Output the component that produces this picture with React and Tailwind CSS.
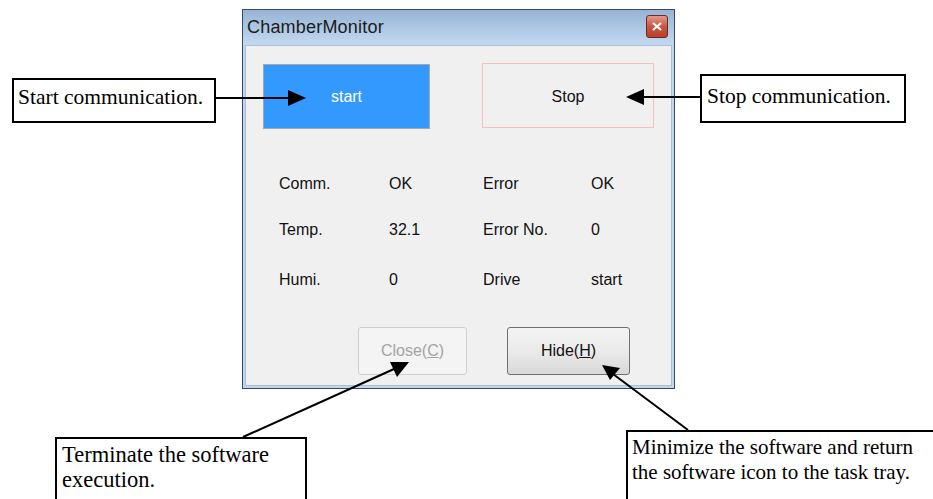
import React from "react";

const uiFont = { fontFamily: '"Liberation Sans", Arial, sans-serif' };
const docFont = { fontFamily: '"Liberation Serif", "Times New Roman", serif' };

const rows = [
  ["Comm.", "OK", "Error", "OK"],
  ["Temp.", "32.1", "Error No.", "0"],
  ["Humi.", "0", "Drive", "start"],
];

const Callout = ({ className, children }) => (
  <div
    className={`absolute border-2 border-black bg-white text-black ${className}`}
    style={docFont}
  >
    {children}
  </div>
);

const ChamberWindow = () => (
  <div
    className="absolute left-[242px] top-[9px] w-[433px] h-[380px] flex flex-col border border-[#3a4a5c] bg-[#c2d7ed]"
    style={uiFont}
  >
    {/* title bar */}
    <div className="h-[35px] flex items-center justify-between pl-[4px] pr-[6px] bg-gradient-to-b from-[#97b4d6] to-[#c3d9ef]">
      <span className="text-[18px] text-[#1b1b1b] tracking-[0.2px]">ChamberMonitor</span>
      <div className="w-[22px] h-[23px] mt-[-2px] rounded-[3px] border border-[#6b2b24] bg-gradient-to-b from-[#e29a8a] via-[#c9553f] to-[#b7402c] flex items-center justify-center">
        <svg width="10" height="9" viewBox="0 0 10 9">
          <path d="M1 1 L9 8 M9 1 L1 8" stroke="#fff" strokeWidth="2.2" />
        </svg>
      </div>
    </div>

    {/* client area */}
    <div className="flex-1 mx-[2px] mb-[2px] bg-[#f0f0f0] border border-[#a9bfd6] flex flex-col">
      <div className="flex justify-between px-[17px] pt-[18px]">
        <button className="w-[167px] h-[65px] bg-[#3399ff] border border-[#a8a8a8] text-white text-[16px]">
          start
        </button>
        <button className="w-[172px] h-[65px] mt-[-1px] pt-[3px] bg-[#f0f0f0] border border-[#f6c0c0] text-[#111] text-[16px]">
          Stop
        </button>
      </div>

      <div className="flex flex-col pl-[33px] mt-[43px] text-[16px] text-[#111]">
        {rows.map((r, i) => (
          <div
            key={r[0]}
            className={`grid grid-cols-[110px_94px_108px_auto] h-[20px] items-center ${i === 1 ? "mt-[26px]" : i === 2 ? "mt-[30px]" : ""}`}
          >
            {r.map((c, j) => (
              <span key={j}>{c}</span>
            ))}
          </div>
        ))}
      </div>

      <div className="flex pl-[112px] gap-[40px] mt-[39px]">
        <button className="w-[109px] h-[48px] rounded-[3px] border border-[#cfcfcf] bg-[#f4f4f4] text-[#a3a3a3] text-[16px]">
          Close(<span className="underline">C</span>)
        </button>
        <button className="w-[123px] h-[48px] rounded-[3px] border border-[#707070] bg-gradient-to-b from-[#f3f3f3] via-[#ebebeb] to-[#d8d8d8] text-[#111] text-[16px]">
          Hide(<span className="underline">H</span>)
        </button>
      </div>
    </div>
  </div>
);

export default function App() {
  return (
    <div className="relative w-[933px] h-[499px] bg-white overflow-hidden">
      <ChamberWindow />

      <Callout className="left-[12px] top-[78px] w-[204px] h-[45px] pl-[4px] pt-[5px] text-[21.5px] leading-[24px]">
        Start communication.
      </Callout>
      <Callout className="left-[700px] top-[74px] w-[206px] h-[49px] pl-[5px] pt-[8px] text-[21.5px] leading-[24px]">
        Stop communication.
      </Callout>
      <Callout className="left-[55px] top-[437px] w-[252px] h-[80px] pl-[5px] pt-[3px] text-[22.5px] leading-[25px]">
        Terminate the software
        <br />
        execution.
      </Callout>
      <Callout className="left-[626px] top-[430px] w-[330px] h-[90px] pl-[4px] pt-[3px] text-[21px] leading-[25px]">
        Minimize the software and return
        <br />
        the software icon to the task tray.
      </Callout>

      <svg className="absolute inset-0 pointer-events-none" width="933" height="499">
        <g stroke="#000" strokeWidth="2" fill="#000">
          <line x1="216" y1="98" x2="290" y2="98" />
          <polygon points="288,90 306,98 288,106" stroke="none" />
          <line x1="642" y1="97" x2="700" y2="97" />
          <polygon points="644,89 626,97 644,105" stroke="none" />
          <line x1="243" y1="437" x2="394" y2="369" />
          <polygon points="409,362 390,362 397,377" stroke="none" />
          <line x1="688" y1="430" x2="613" y2="374" />
          <polygon points="602,365 620,368 610,380" stroke="none" />
        </g>
      </svg>
    </div>
  );
}
